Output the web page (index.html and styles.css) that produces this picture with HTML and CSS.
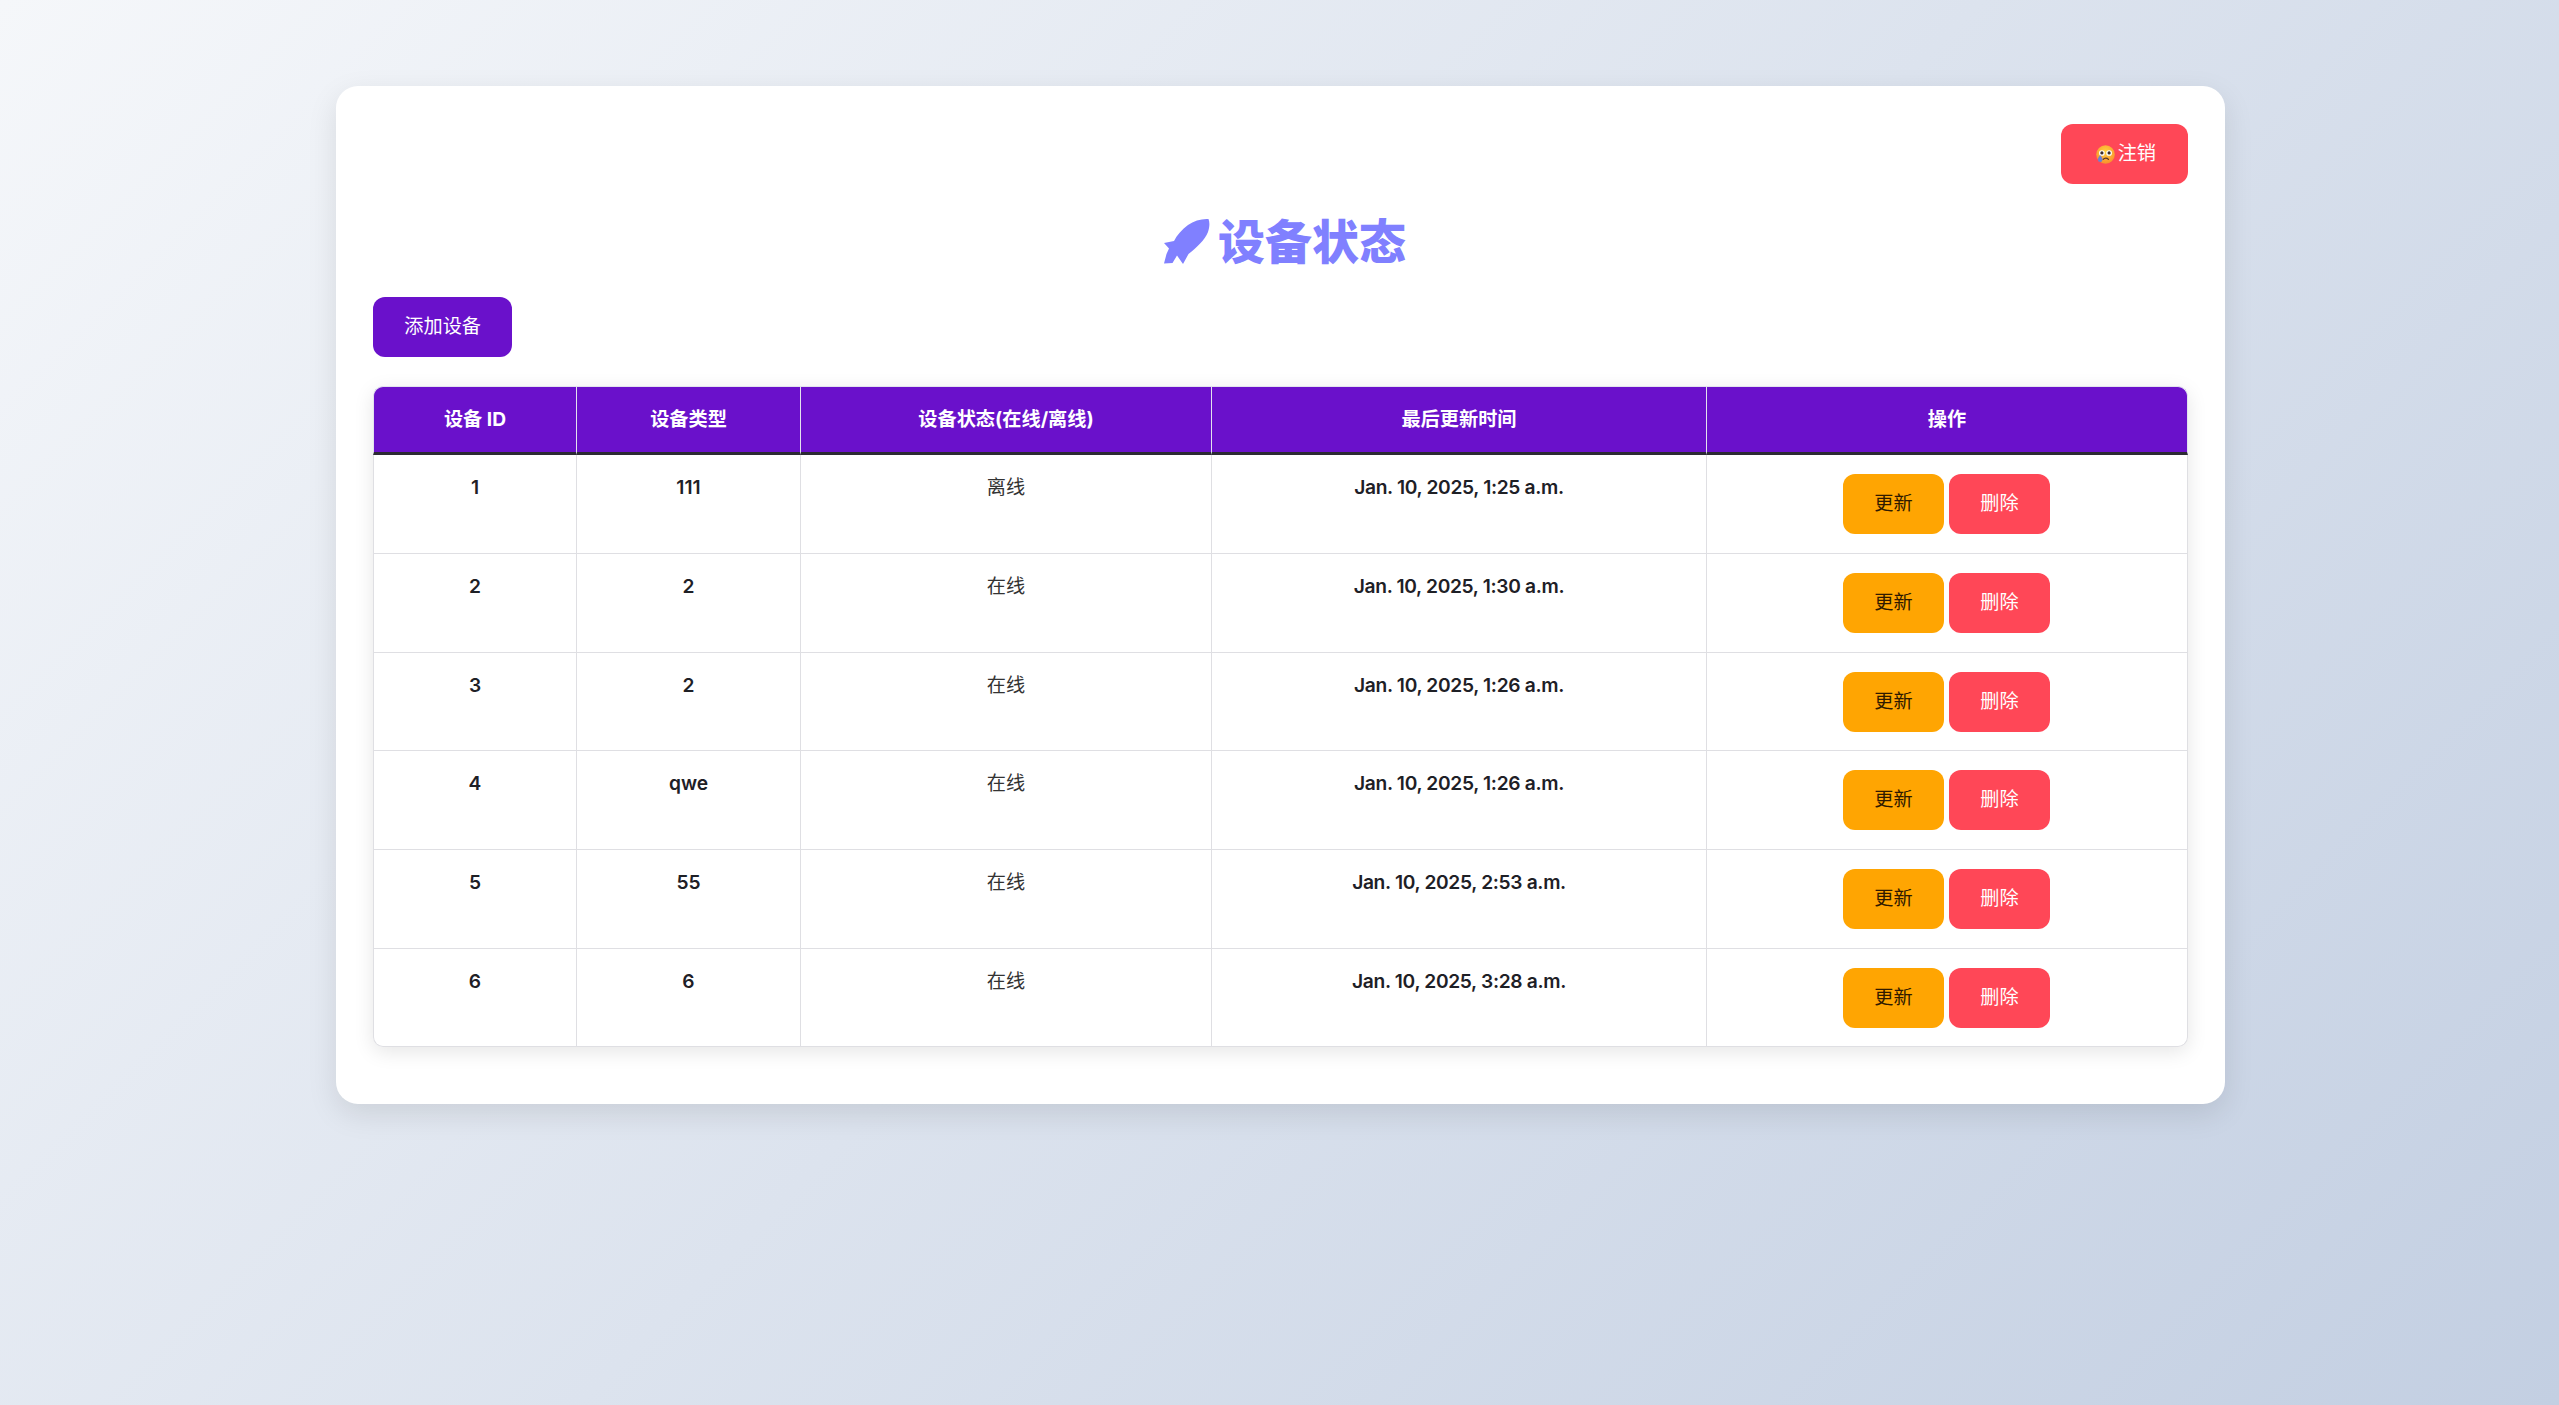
FILE: index.html
```html
<!DOCTYPE html>
<html lang="zh">
<head>
  <meta charset="UTF-8">
  <title>设备状态</title>
  <meta name="viewport" content="width=device-width, initial-scale=1.0">
  <link rel="stylesheet" href="styles.css">
</head>
<body>

  <div class="container">
    <div class="top-bar">
      <a class="btn btn-red btn-logout" href="#">
        <svg class="emoji" viewBox="0 0 20 20" aria-hidden="true">
          <defs>
            <radialGradient id="face" cx="50%" cy="35%" r="65%">
              <stop offset="0" stop-color="#ffd23f"/>
              <stop offset="1" stop-color="#f9912c"/>
            </radialGradient>
          </defs>
          <circle cx="10" cy="10" r="9.8" fill="url(#face)"/>
          <circle cx="6.2" cy="8.4" r="3" fill="#fff"/>
          <circle cx="13.8" cy="8.4" r="3" fill="#fff"/>
          <circle cx="6.2" cy="8.4" r="1.7" fill="#3a2a28"/>
          <circle cx="13.8" cy="8.4" r="1.7" fill="#3a2a28"/>
          <path d="M7.5 15.2c1.5-1.8 4-1.8 5.6 0" fill="none" stroke="#5a3326" stroke-width="1.3" stroke-linecap="round"/>
          <path d="M4.4 10.8c1.6 1.8 2.4 3.2 2.4 4.6a2.4 2.4 0 0 1-4.8 0c0-1.6.9-3 2.4-4.6z" fill="#6f7fd0"/>
        </svg>注销
      </a>
    </div>

    <h1 class="title">
      <svg class="rocket" viewBox="0 0 47 46" aria-hidden="true">
        <path d="M45.500 1C39 .5 31 2.500 25 7C19 11.500 14 17 11 23L1 25L6 30.500L3.500 36L1 45.500L9.500 45L14 37.500L20 46L25.500 36C33 30 42 22 45 14C46.500 9.500 47 4.500 45.500 1z"/>
      </svg>
      <span>设备状态</span>
    </h1>

    <a class="btn btn-purple" href="#">添加设备</a>

    <div class="table-wrap">
      <table class="device-table">
        <thead>
          <tr>
            <th class="col-id">设备 ID</th>
            <th class="col-type">设备类型</th>
            <th class="col-status">设备状态(在线/离线)</th>
            <th class="col-time">最后更新时间</th>
            <th>操作</th>
          </tr>
        </thead>
        <tbody>
          <tr>
            <td class="strong">1</td><td class="strong">111</td><td>离线</td><td class="strong date">Jan. 10, 2025, 1:25 a.m.</td>
            <td class="actions"><a class="btn btn-orange" href="#">更新</a><a class="btn btn-red" href="#">删除</a></td>
          </tr>
          <tr>
            <td class="strong">2</td><td class="strong">2</td><td>在线</td><td class="strong date">Jan. 10, 2025, 1:30 a.m.</td>
            <td class="actions"><a class="btn btn-orange" href="#">更新</a><a class="btn btn-red" href="#">删除</a></td>
          </tr>
          <tr>
            <td class="strong">3</td><td class="strong">2</td><td>在线</td><td class="strong date">Jan. 10, 2025, 1:26 a.m.</td>
            <td class="actions"><a class="btn btn-orange" href="#">更新</a><a class="btn btn-red" href="#">删除</a></td>
          </tr>
          <tr>
            <td class="strong">4</td><td class="strong">qwe</td><td>在线</td><td class="strong date">Jan. 10, 2025, 1:26 a.m.</td>
            <td class="actions"><a class="btn btn-orange" href="#">更新</a><a class="btn btn-red" href="#">删除</a></td>
          </tr>
          <tr>
            <td class="strong">5</td><td class="strong">55</td><td>在线</td><td class="strong date">Jan. 10, 2025, 2:53 a.m.</td>
            <td class="actions"><a class="btn btn-orange" href="#">更新</a><a class="btn btn-red" href="#">删除</a></td>
          </tr>
          <tr>
            <td class="strong">6</td><td class="strong">6</td><td>在线</td><td class="strong date">Jan. 10, 2025, 3:28 a.m.</td>
            <td class="actions"><a class="btn btn-orange" href="#">更新</a><a class="btn btn-red" href="#">删除</a></td>
          </tr>
        </tbody>
      </table>
    </div>
  </div>

</body>
</html>
```

FILE: styles.css
```css
* {
  box-sizing: border-box;
}

html, body {
  height: 100%;
}

body {
  margin: 0;
  padding: 86px 334px 0 336px;
  background: linear-gradient(135deg, #f5f7fa 0%, #c3cfe2 100%);
  font-family: "Inter", "Noto Sans CJK SC", sans-serif;
  font-size: 19.2px;
  color: #333;
}

.container {
  background: #fff;
  border-radius: 22px;
  padding: 38px 37px 57px;
  box-shadow: 0 10px 30px rgba(0, 0, 0, 0.1);
}

.top-bar {
  display: flex;
  justify-content: flex-end;
}

.btn {
  display: inline-block;
  height: 60px;
  line-height: 59px;
  padding: 0 31.3px;
  border-radius: 12px;
  text-decoration: none;
  font-size: 19.2px;
  white-space: nowrap;
}

.btn-red {
  background: #ff4757;
  color: #fff;
}

.btn-orange {
  background: #ffa502;
  color: #2f1a00;
}

.btn-purple {
  display: block;
  width: 139px;
  background: #6a11cb;
  color: #fff;
}

.btn-logout {
  padding: 0 32px;
}

.emoji {
  width: 19px;
  height: 19px;
  margin: 0 3px;
  vertical-align: -4px;
}

.title {
  display: flex;
  justify-content: center;
  align-items: center;
  gap: 8px;
  margin: 25px 0 22px;
  padding-left: 8px;
  height: 66px;
  color: #8080ff;
  font-size: 47px;
  font-weight: 800;
  line-height: 66px;
}

.rocket {
  width: 47px;
  height: 46px;
  margin-top: -2px;
  fill: #8080ff;
}

.table-wrap {
  margin-top: 29px;
  border-radius: 10px;
  box-shadow: 0 5px 20px rgba(0, 0, 0, 0.1);
}

.device-table {
  width: 100%;
  border-collapse: separate;
  border-spacing: 0;
  table-layout: fixed;
  text-align: center;
}

.device-table th {
  height: 69px;
  padding: 0 0 1px;
  background: #6a11cb;
  color: #fff;
  font-size: 19.2px;
  font-weight: 700;
  line-height: 26px;
  border-top: 1px solid #e3e3ee;
  border-right: 1px solid #e3e3ee;
  border-bottom: 3px solid #2b2a33;
}

.device-table th:first-child {
  border-left: 1px solid #e3e3ee;
  border-top-left-radius: 10px;
}

.device-table th:last-child {
  border-top-right-radius: 10px;
}

.col-id { width: 204px; }
.col-type { width: 224px; }
.col-status { width: 411px; }
.col-time { width: 495px; }

.device-table td {
  height: 99px;
  padding: 19px 10px 0;
  vertical-align: top;
  line-height: 27px;
  border-right: 1px solid #dfdfe3;
  border-bottom: 1px solid #dfdfe3;
}

.device-table tr:nth-child(3n) td {
  height: 98px;
}

.device-table td:first-child {
  border-left: 1px solid #dfdfe3;
}

.device-table tr:last-child td:first-child {
  border-bottom-left-radius: 10px;
}

.device-table tr:last-child td:last-child {
  border-bottom-right-radius: 10px;
}

.strong {
  font-weight: 600;
  color: #1e2026;
}

.date {
  letter-spacing: -0.33px;
}

.device-table .actions {
  padding-right: 11px;
}

.actions .btn + .btn {
  margin-left: 5px;
}
```
